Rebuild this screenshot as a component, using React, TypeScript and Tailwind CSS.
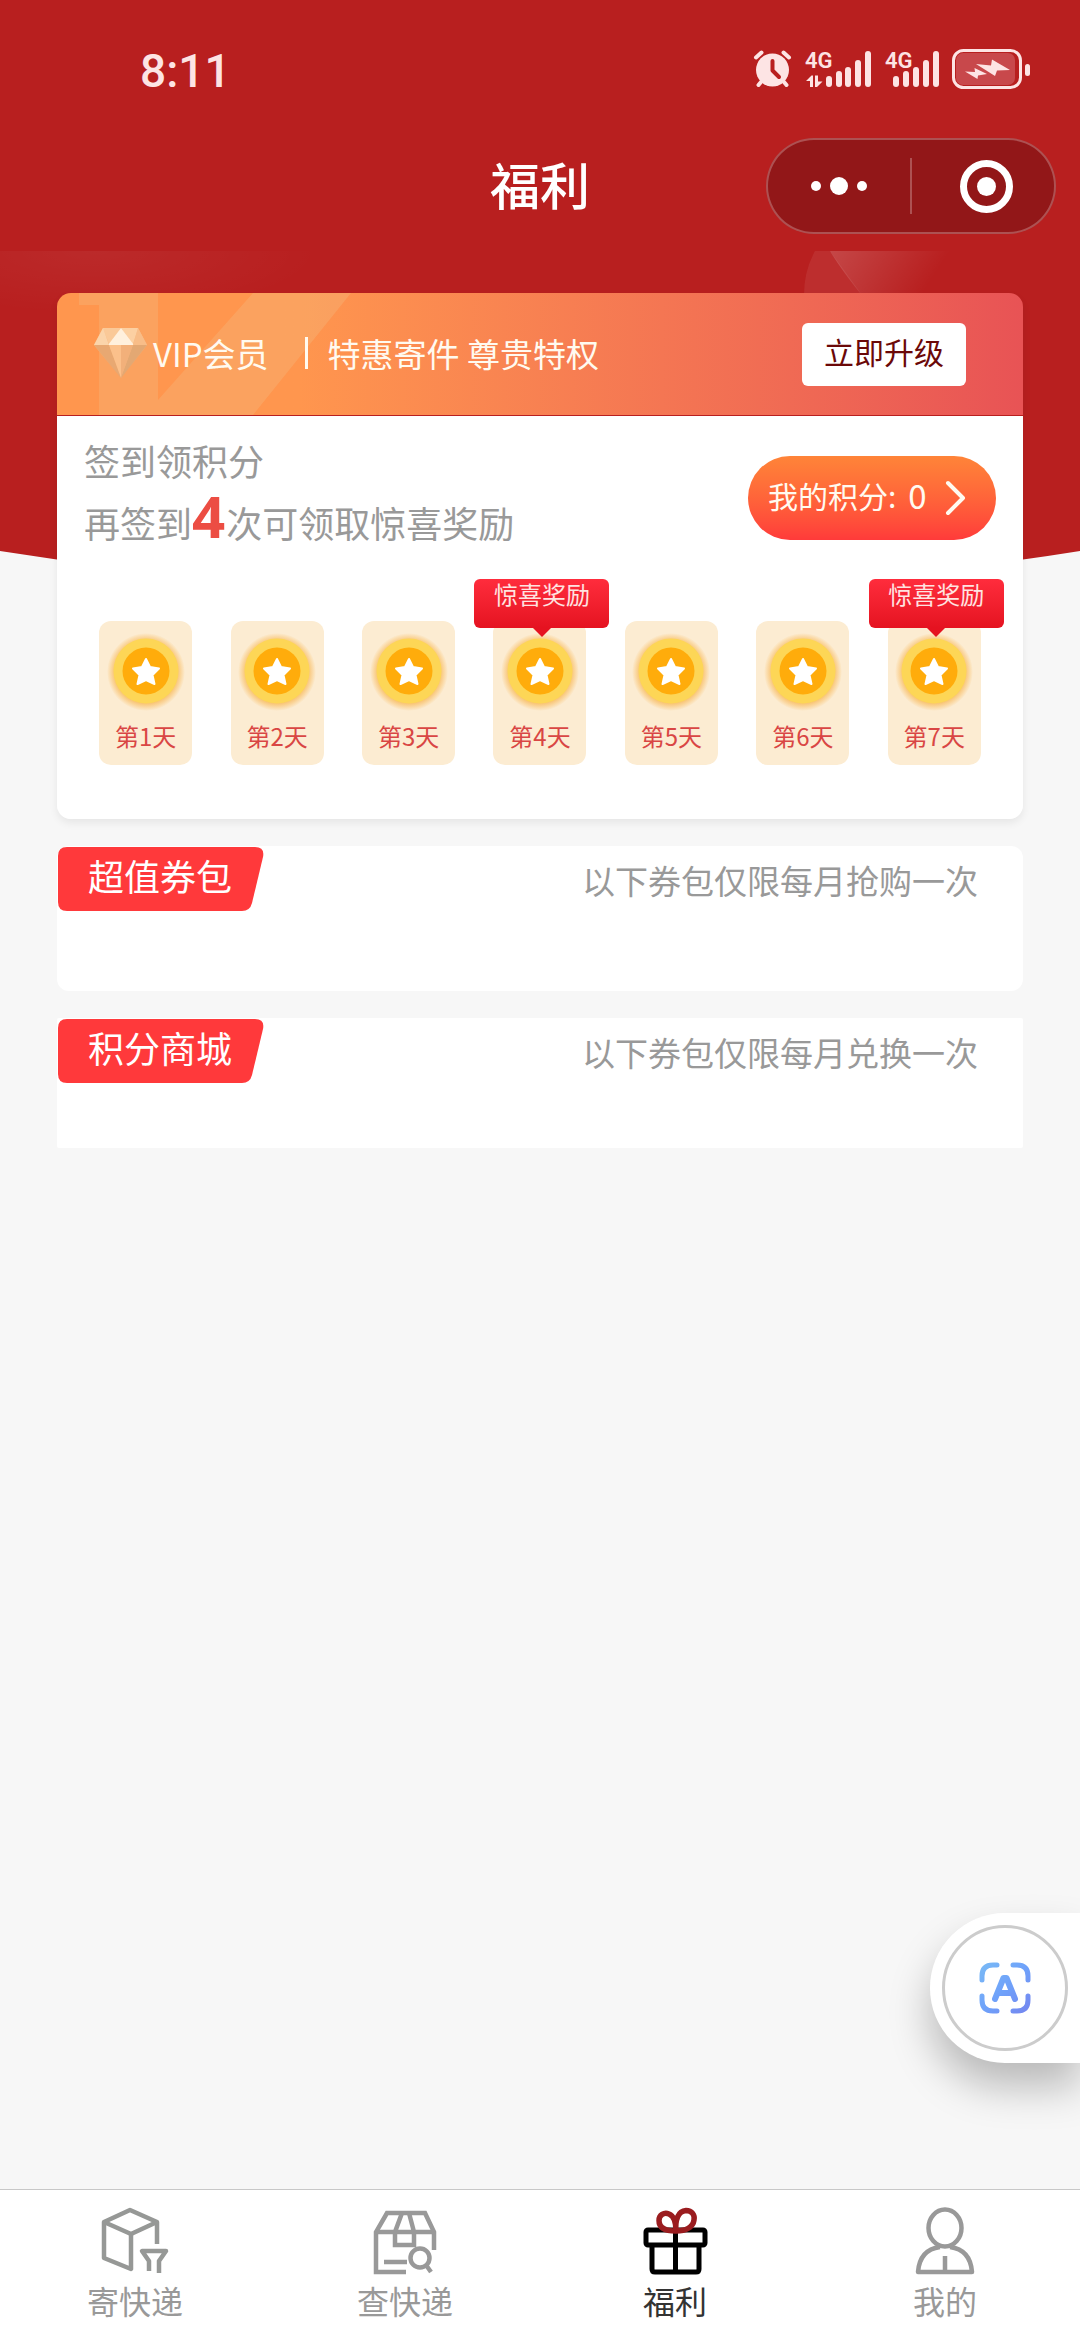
import { useState } from 'react'
import type { ReactNode } from 'react'

interface Day {
  day: number
  bonus: boolean
}

interface Pack {
  title: string
  note: string
  box: string
}

interface Tab {
  id: string
  label: string
  icon: ReactNode
}

const DAYS: Day[] = [
  { day: 1, bonus: false },
  { day: 2, bonus: false },
  { day: 3, bonus: false },
  { day: 4, bonus: true },
  { day: 5, bonus: false },
  { day: 6, bonus: false },
  { day: 7, bonus: true },
]

const PACKS: Pack[] = [
  { title: '超值券包', note: '以下券包仅限每月抢购一次', box: 'rounded-xl pb-[79px]' },
  { title: '积分商城', note: '以下券包仅限每月兑换一次', box: 'rounded-xs pb-16' },
]

const TABS: Tab[] = [
  { id: 'send', label: '寄快递', icon: <SendIcon /> },
  { id: 'track', label: '查快递', icon: <TrackIcon /> },
  { id: 'welfare', label: '福利', icon: <GiftIcon /> },
  { id: 'mine', label: '我的', icon: <MineIcon /> },
]

function AlarmIcon() {
  return (
    <svg width="40" height="38" viewBox="0 0 40 38" fill="none" aria-hidden="true">
      <circle cx="19.500" cy="20" r="16.500" fill="#fde4e4" />
      <path d="M3 7.500L8.500 2.500M36 7.500L30.500 2.500M8 32L5.500 35M31 32L33.500 35" stroke="#fde4e4" strokeWidth="4" strokeLinecap="round" />
      <path d="M19.500 11V20.500L26 27" stroke="#b81f1f" strokeWidth="4" strokeLinecap="round" strokeLinejoin="round" />
    </svg>
  )
}

function SignalOne() {
  return (
    <svg className="overflow-visible" width="68" height="38" viewBox="0 0 68 38" fill="#fde4e4" aria-hidden="true">
      <text x="0" y="18" fontSize="22" fontWeight="600" fontFamily="Roboto, sans-serif">4G</text>
      <path d="M5 26V37H8V25.500H6.500L1 31H5ZM10 25.500V37H12L17.500 31.500H13V25.500Z" />
      <rect x="21" y="26" width="6" height="11" rx="3" />
      <rect x="31" y="21" width="6" height="16" rx="3" />
      <rect x="40" y="17" width="6" height="20" rx="3" />
      <rect x="50" y="10" width="6" height="27" rx="3" />
      <rect x="60" y="1" width="6" height="36" rx="3" />
    </svg>
  )
}

function SignalTwo() {
  return (
    <svg className="overflow-visible" width="55" height="38" viewBox="0 0 55 38" fill="#fde4e4" aria-hidden="true">
      <text x="0" y="18" fontSize="22" fontWeight="600" fontFamily="Roboto, sans-serif">4G</text>
      <rect x="8" y="26" width="6" height="11" rx="3" />
      <rect x="18" y="21" width="6" height="16" rx="3" />
      <rect x="28" y="17" width="6" height="20" rx="3" />
      <rect x="38" y="10" width="6" height="27" rx="3" />
      <rect x="48" y="1" width="6" height="36" rx="3" />
    </svg>
  )
}

function BatteryIcon() {
  return (
    <svg width="79" height="41" viewBox="0 0 79 41" fill="none" aria-hidden="true">
      <rect x="1.500" y="1.500" width="67" height="37" rx="10" stroke="#fde4e4" strokeWidth="3" />
      <rect x="4" y="4" width="59" height="32" rx="7" fill="#c8484b" />
      <rect x="73" y="15" width="5" height="12" rx="2.500" fill="#fde4e4" />
      <path d="M13 22.500L23 23L22.500 19L35 25L26 26.500L25.500 30Z M24 15L39 16.500L40 10.500L58 21L45 21.500L43 27Z" fill="#fde4e4" />
    </svg>
  )
}

function DiamondIcon() {
  return (
    <svg width="56" height="52" viewBox="0 0 56 52" aria-hidden="true">
      <defs>
        <linearGradient id="gem" x1="0" y1="0" x2="0" y2="1">
          <stop offset="0" stopColor="#f9c48e" />
          <stop offset="1" stopColor="#eda062" />
        </linearGradient>
      </defs>
      <path d="M10 1H45L54 18L28 51L1 18Z" fill="url(#gem)" />
      <path d="M10 1L16 17L28 1Z" fill="#fac998" />
      <path d="M28 1L40 17L45 1Z" fill="#fcd0a2" />
      <path d="M28 1L41 18H15Z" fill="#fff0dd" />
      <path d="M1 18H16L10 1Z" fill="#fbd4aa" />
      <path d="M54 18H40L45 1Z" fill="#f8bd88" />
      <path d="M1 18H16L28 51Z" fill="#e8a872" />
      <path d="M16 18H40L28 51Z" fill="#fbc08b" />
      <path d="M28 18H40L28 51Z" fill="#f2b07a" />
      <path d="M40 18H54L28 51Z" fill="#e3a873" />
    </svg>
  )
}

function Coin() {
  return (
    <svg className="overflow-visible" width="72" height="72" viewBox="0 0 72 72" aria-hidden="true">
      <defs>
        <radialGradient id="glow">
          <stop offset="0.78" stopColor="#f8b44c" stopOpacity="0.8" />
          <stop offset="1" stopColor="#f8b44c" stopOpacity="0" />
        </radialGradient>
      </defs>
      <circle cx="36" cy="37" r="39" fill="url(#glow)" />
      <circle cx="36" cy="36" r="32.500" fill="#fdd656" />
      <circle cx="36" cy="36" r="23.500" fill="#ffac0b" />
      <path
        d="M36 24L40 32L49 33.500L42.500 40L44.500 49L36 45L27.500 49L29.500 40L23 33.500L32 32Z"
        fill="#fff"
        stroke="#fff"
        strokeWidth="2"
        strokeLinejoin="round"
      />
    </svg>
  )
}

function SendIcon() {
  return (
    <svg width="68" height="68" viewBox="0 0 68 68" fill="none" stroke="#969896" strokeWidth="4.500" strokeLinejoin="round" aria-hidden="true">
      <path d="M56 37V15L29 3L3 15V51L30 62V27" />
      <path d="M3 15L30 27L56 15" />
      <path d="M48 64V54L41 44H65L58 54V66" />
    </svg>
  )
}

function TrackIcon() {
  return (
    <svg width="68" height="68" viewBox="0 0 68 68" fill="none" stroke="#999" strokeWidth="4.500" aria-hidden="true">
      <path d="M35 65H5V25L16 6H54L63 25V43" />
      <path d="M5 25H63M31 6L24 25V38H43V25L38 6M13 55H36" />
      <circle cx="49" cy="51" r="9.500" />
      <path d="M55 58L60 65" />
    </svg>
  )
}

function GiftIcon() {
  return (
    <svg width="68" height="68" viewBox="0 0 68 68" fill="none" strokeWidth="5" strokeLinejoin="round" aria-hidden="true">
      <rect x="5" y="23" width="59" height="15" rx="2" stroke="#000" />
      <path d="M11 38V62Q11 65 14 65H55Q58 65 58 62V38M34.500 23V65" stroke="#000" />
      <path d="M35 24C22 24 18 19 18 13.500C18 8 23 5 28 7C33 9 35 15 35 24C34 13 37 4 45 3.500C51 3.500 54 8 53 13C52 20 45 24 35 24Z" stroke="#9a1c1f" strokeWidth="5.500" />
    </svg>
  )
}

function MineIcon() {
  return (
    <svg width="68" height="68" viewBox="0 0 68 68" fill="none" stroke="#999" strokeWidth="4.500" strokeLinejoin="round" aria-hidden="true">
      <ellipse cx="34" cy="21" rx="16.500" ry="18.500" />
      <path d="M29 40C14 42 8 52 7 65H61C60 52 54 42 39 40M34 49V65" />
    </svg>
  )
}

function ScanIcon() {
  return (
    <svg width="54" height="54" viewBox="0 0 54 54" fill="none" stroke="url(#scan)" strokeWidth="5" strokeLinecap="round" strokeLinejoin="round" aria-hidden="true">
      <defs>
        <linearGradient id="scan" x1="0" y1="0" x2="54" y2="54" gradientUnits="userSpaceOnUse">
          <stop offset="0" stopColor="#7bbcf5" />
          <stop offset="0.5" stopColor="#6fa2fa" />
          <stop offset="1" stopColor="#7583ee" />
        </linearGradient>
      </defs>
      <path d="M4 19V15Q4 4 15 4H19M35 4H39Q50 4 50 15V19M50 35V39Q50 50 39 50H35M19 50H15Q4 50 4 39V35" />
      <path d="M17 38L25.500 17H28.500L37 38M20 32H34" strokeWidth="6" />
    </svg>
  )
}

function Header() {
  return (
    <header className="bg-[#b81f1f] pb-[17px]">
      <div className="flex h-[138px] items-center justify-between pr-[49px] pl-[140px]">
        <span className="pt-1 font-[Roboto,sans-serif] text-[46px] leading-none font-medium text-[#fde4e4]">8:11</span>
        <div className="flex items-center gap-3">
          <AlarmIcon />
          <SignalOne />
          <SignalTwo />
          <BatteryIcon />
        </div>
      </div>
      <div className="grid grid-cols-3 items-center">
        <h1 className="col-start-2 pb-1.5 text-center text-[50px] leading-none font-medium text-white">福利</h1>
        <div className="mr-6 flex h-24 w-[290px] items-center justify-self-end rounded-full border-2 border-white/25 bg-[#921718]">
          <button type="button" aria-label="更多" className="flex flex-1 items-center justify-center gap-[9px]">
            <span className="size-2.5 rounded-full bg-white" />
            <span className="size-[18px] rounded-full bg-white" />
            <span className="size-2.5 rounded-full bg-white" />
          </button>
          <span className="h-14 w-0.5 bg-white/25" />
          <button type="button" aria-label="关闭" className="flex flex-1 justify-center">
            <span className="ml-1.5 flex size-[53px] items-center justify-center rounded-full border-[7px] border-white">
              <span className="size-[19px] rounded-full bg-white" />
            </span>
          </button>
        </div>
      </div>
    </header>
  )
}

/* Red backdrop that hangs below the header and curves out at the bottom */
function Backdrop() {
  return (
    <svg className="absolute inset-x-0 top-0 h-[360px] w-full" viewBox="0 0 1080 360" preserveAspectRatio="none" aria-hidden="true">
      <defs>
        <linearGradient id="leaf" x1="0" y1="0" x2="1" y2="0.3">
          <stop offset="0" stopColor="#fff" stopOpacity="0.18" />
          <stop offset="0.85" stopColor="#fff" stopOpacity="0" />
        </linearGradient>
        <radialGradient id="haze" cx="0.3" cy="0" r="0.7">
          <stop offset="0" stopColor="#fff" stopOpacity="0.05" />
          <stop offset="1" stopColor="#fff" stopOpacity="0" />
        </radialGradient>
      </defs>
      <path d="M0 0H1080V300Q540 386 0 300Z" fill="#b81f1f" />
      <rect width="320" height="90" fill="url(#haze)" />
      <path d="M815 0H830L862 44H804Q804 20 815 0Z" fill="#fff" fillOpacity="0.07" />
      <path d="M830 0H960V60H875Q845 25 830 0Z" fill="url(#leaf)" />
    </svg>
  )
}

function VipBanner() {
  return (
    <div className="relative flex items-center overflow-hidden rounded-t-[14px] border-b border-[#b81f1f] bg-linear-to-r from-[#ff964e] from-25% to-[#e85355] pt-[30px] pr-[57px] pb-[29px] pl-9 text-[33px] leading-[48px] text-[#fffaf0]">
      <svg className="absolute inset-y-0 left-0" width="300" height="122" viewBox="0 0 300 122" aria-hidden="true">
        <path d="M22 0H101V107L196 0H294L196 122H42V12H22Z" fill="#f3c088" fillOpacity="0.3" />
      </svg>
      <div className="relative flex flex-1 items-center pb-1">
        <DiamondIcon />
        <span className="ml-1">VIP会员</span>
        <span className="mr-5 ml-9 h-8 w-[3px] bg-[#fffaf0]" />
        <span>特惠寄件 尊贵特权</span>
      </div>
      <button type="button" className="rounded-md bg-white px-[22px] pt-[13px] pb-5 text-3xl leading-[30px] text-[#6b0808]">
        立即升级
      </button>
    </div>
  )
}

function DayTile({ day, bonus }: Day) {
  return (
    <li className="flex justify-center">
      <div className="relative flex w-[93px] flex-col items-center rounded-xl bg-[#fcecd2] pt-3.5 pb-3">
        <Coin />
        <span className="mt-3 text-2xl leading-[34px] text-[#d94644]">第{day}天</span>
        {bonus && (
          <div className="absolute -top-[42px] -left-[19px] h-[49px] w-[135px] rounded-md bg-linear-to-b from-[#ff2c3c] to-[#e51220] text-center text-2xl leading-[30px] text-[#ffe3e0]">
            惊喜奖励
            <svg className="absolute top-full left-1/2 -translate-x-1/2" width="18" height="9" viewBox="0 0 18 9" aria-hidden="true">
              <path d="M0 0H18L9 9Z" fill="#e51220" />
            </svg>
          </div>
        )}
      </div>
    </li>
  )
}

function SignInCard() {
  return (
    <section className="rounded-[14px] shadow-[0_4px_8px_rgba(0,0,0,0.07)]">
      <VipBanner />
      <div className="rounded-b-[14px] bg-white px-[23px] pt-[19px] pb-[54px]">
        <div className="flex items-center justify-between px-1">
          <div className="text-4xl text-[#999]">
            <h2 className="leading-[50px]">签到领积分</h2>
            <p className="mt-1.5 leading-[62px]">
              再签到<strong className="mr-px font-['Noto_Sans',sans-serif] text-[58px] leading-10 font-bold text-[#ec4d43]">4</strong>次可领取惊喜奖励
            </p>
          </div>
          <button type="button" className="mt-2 flex h-[84px] w-[248px] items-center rounded-full bg-linear-to-b from-[#ff8438] to-[#ff3a3a] pl-5 text-3xl text-[#fffaf0]">
            <span className="pb-1.5">我的积分:</span>
            <span className="ml-3 pb-1.5 text-[33px] leading-none">0</span>
            <svg className="ml-[18px]" width="22" height="36" viewBox="0 0 22 36" fill="none" stroke="#fffaf0" strokeWidth="4" strokeLinecap="round" strokeLinejoin="round" aria-hidden="true">
              <path d="M3 3L18 18L3 33" />
            </svg>
          </button>
        </div>
        <ul className="mt-[68px] grid grid-cols-7">
          {DAYS.map(d => (
            <DayTile key={d.day} {...d} />
          ))}
        </ul>
      </div>
    </section>
  )
}

function PackCard({ title, note, box }: Pack) {
  return (
    <section className={`flex justify-between bg-white pr-[45px] ${box}`}>
      <h2 className="relative m-px flex h-16 w-[206px] items-center pb-2 pl-[30px] text-4xl leading-none text-white">
        <svg className="absolute inset-0" width="206" height="64" viewBox="0 0 206 64" aria-hidden="true">
          <path d="M9 0H197Q207 0 205 10L194 56Q192 64 184 64H9Q0 64 0 55V9Q0 0 9 0Z" fill="#ff393b" />
        </svg>
        <span className="relative">{title}</span>
      </h2>
      <p className="pt-2.5 text-[33px] leading-[48px] text-[#999]">{note}</p>
    </section>
  )
}

export default function App() {
  const [active, setActive] = useState('welfare')

  return (
    <div className="flex min-h-screen flex-col bg-[#f7f7f7] font-['Noto_Sans_CJK_SC',sans-serif]">
      <Header />
      <main className="relative flex-1">
        <Backdrop />
        <div className="relative flex flex-col gap-[27px] px-[57px] pt-[42px]">
          <SignInCard />
          {PACKS.map(p => (
            <PackCard key={p.title} {...p} />
          ))}
        </div>
      </main>

      <button
        type="button"
        aria-label="识别文字"
        className="fixed right-0 bottom-[277px] rounded-l-full bg-white p-3 shadow-[0_24px_40px_rgba(0,0,0,0.25)]"
      >
        <span className="flex size-[126px] items-center justify-center rounded-full border-[3px] border-[#ccc]">
          <ScanIcon />
        </span>
      </button>

      {/* Tab bar */}
      <nav className="grid grid-cols-4 border-t border-[#c8c8c8] bg-white py-[17px]">
        {TABS.map(t => (
          <a
            key={t.id}
            href={`#${t.id}`}
            onClick={() => setActive(t.id)}
            className={`flex flex-col items-center text-[32px] leading-[46px] ${active === t.id ? 'text-[#333]' : 'text-[#999]'}`}
          >
            {t.icon}
            <span className="mt-0.5">{t.label}</span>
          </a>
        ))}
      </nav>
    </div>
  )
}
